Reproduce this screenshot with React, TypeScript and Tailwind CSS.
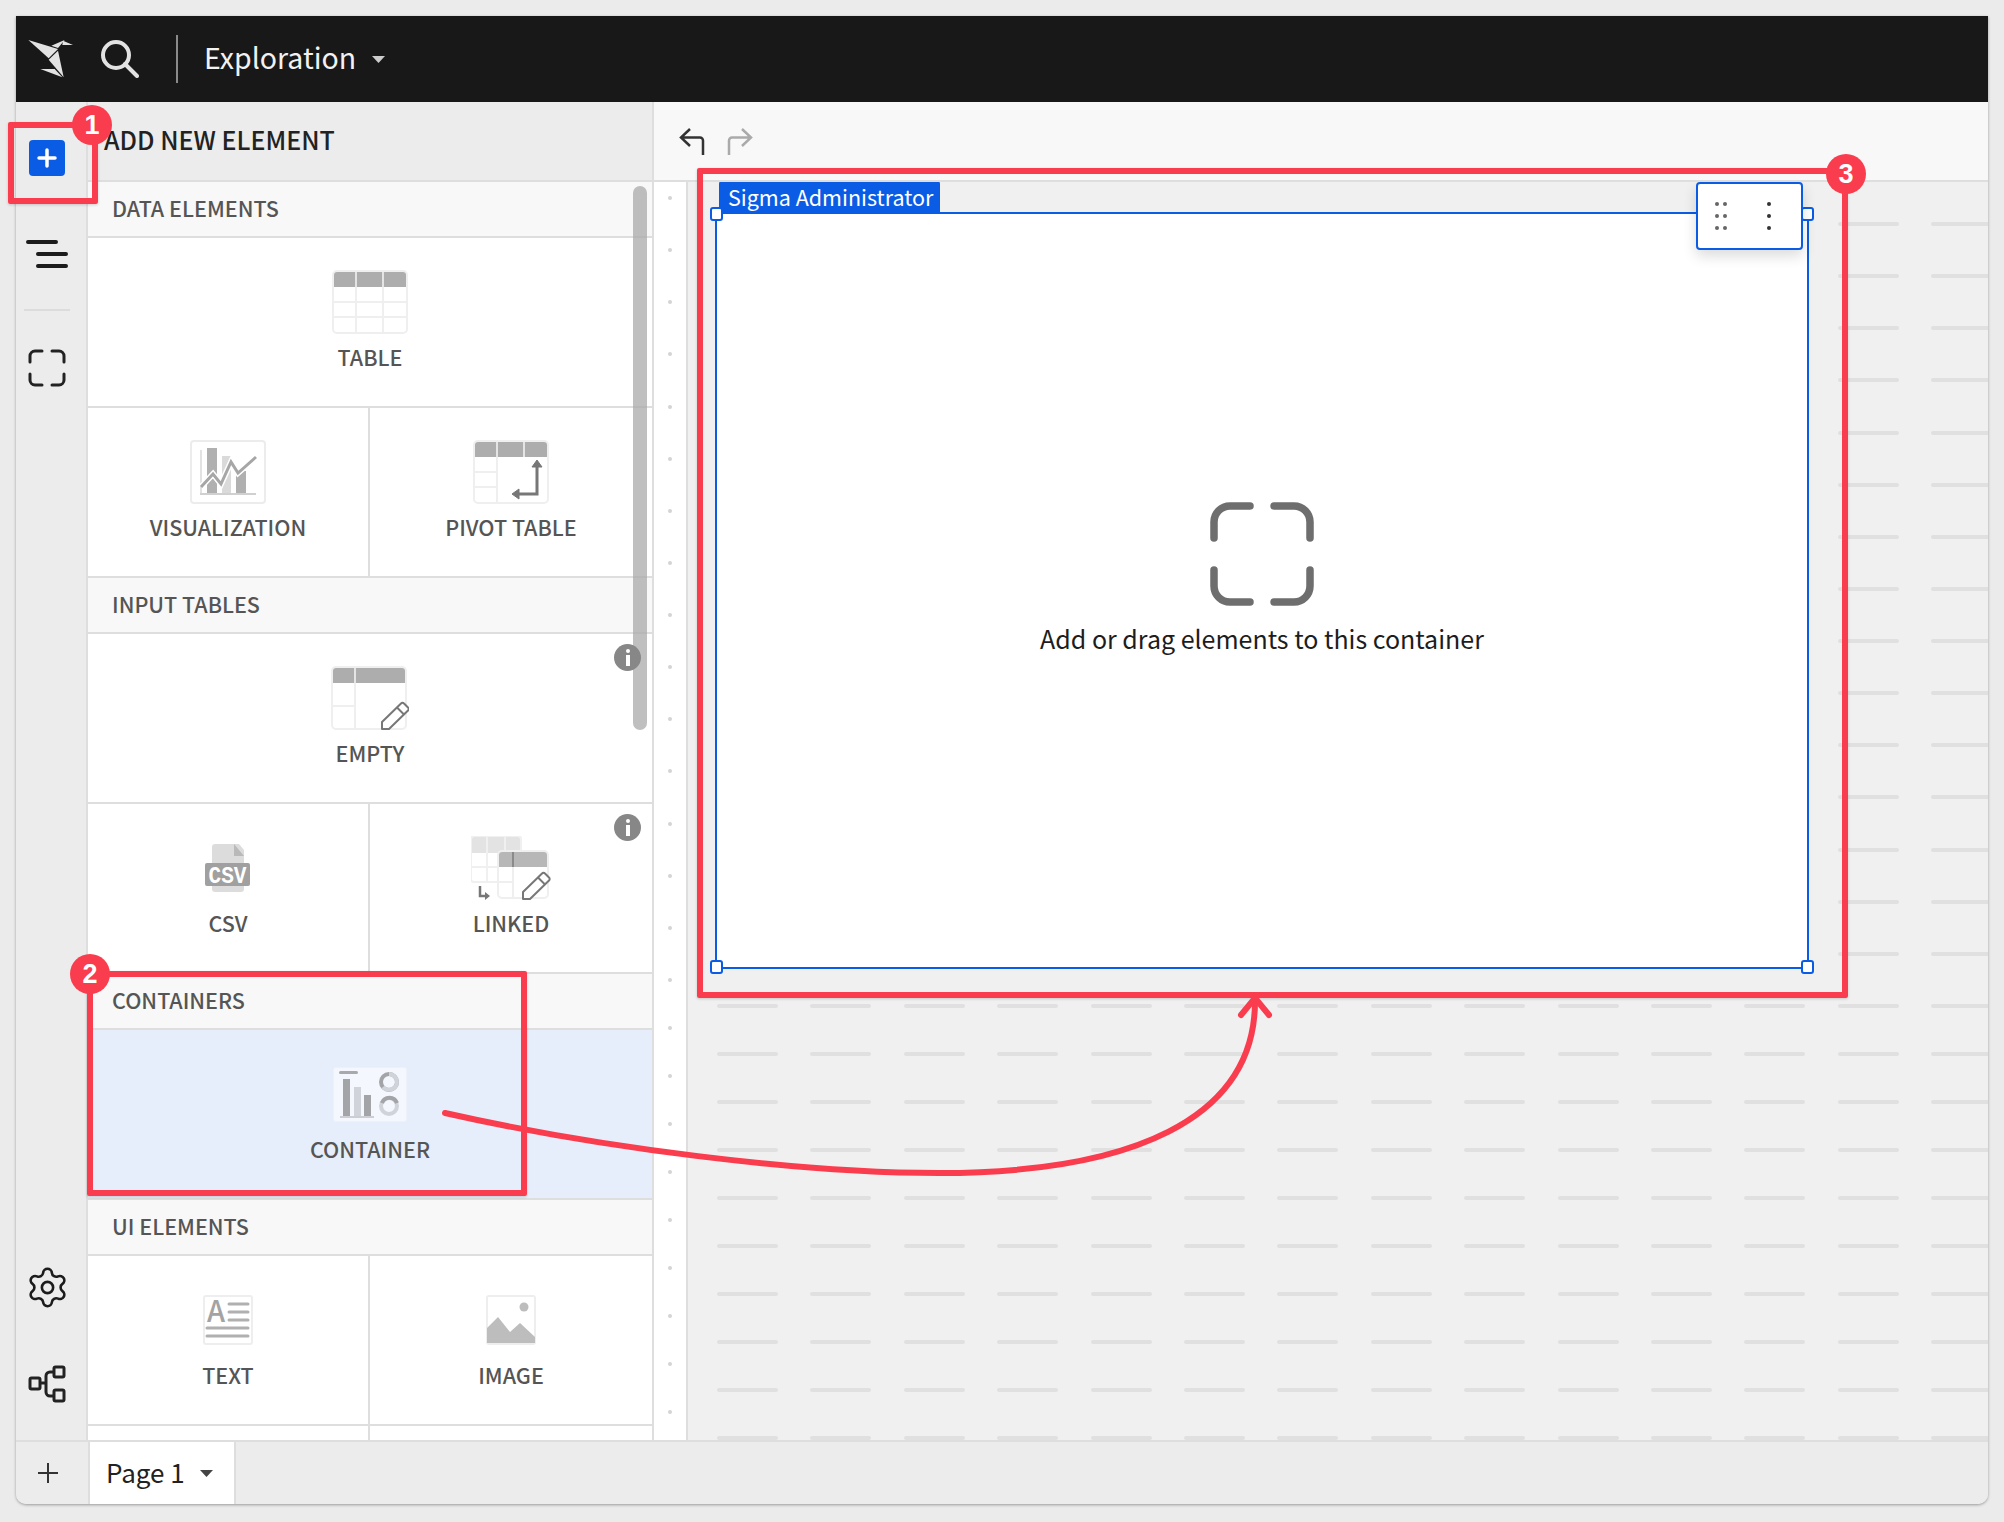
import React from "react";
import { Settings } from "lucide-react";

const font = { fontFamily: '"Noto Sans CJK SC", "Noto Sans", sans-serif' };

function TableBase({ v, rows, band = "#adadad" }: { v: number[]; rows: { x1: number; x2: number; y: number }[]; band?: string }) {
  return (
    <>
      <rect x="1" y="1" width="74" height="62" rx="4" fill="#fff" stroke="#efefef" strokeWidth="2" />
      <path d="M2 5a3 3 0 0 1 3-3h66a3 3 0 0 1 3 3v12H2z" fill={band} />
      {v.map((x) => (
        <line key={x} x1={x} x2={x} y1="2" y2="17" stroke="#e4e4e4" strokeWidth="2" />
      ))}
      {v.map((x) => (
        <line key={"b" + x} x1={x} x2={x} y1="17" y2="62" stroke="#efefef" strokeWidth="2" />
      ))}
      {rows.map((r) => (
        <line key={r.y + "-" + r.x1} x1={r.x1} x2={r.x2} y1={r.y} y2={r.y} stroke="#efefef" strokeWidth="2" />
      ))}
    </>
  );
}

const Pencil = ({ dx = 0, dy = 0 }: { dx?: number; dy?: number }) => (
  <g transform={`translate(${dx} ${dy})`} fill="#fff" stroke="#777" strokeWidth="2" strokeLinejoin="round">
    <path d="M51 63v-7L70 37.500a2 2 0 0 1 3 0l4 4a2 2 0 0 1 0 3L58 63z" />
    <path d="M66 41.500l7 7" fill="none" />
  </g>
);

const TableIcon = () => (
  <svg width="76" height="64" viewBox="0 0 76 64">
    <TableBase v={[24, 51]} rows={[{ x1: 2, x2: 74, y: 32 }, { x1: 2, x2: 74, y: 47 }]} />
  </svg>
);

const VizIcon = () => (
  <svg width="76" height="64" viewBox="0 0 76 64">
    <rect x="1" y="1" width="74" height="62" rx="3" fill="#fff" stroke="#ececec" strokeWidth="2" />
    <rect x="10" y="10" width="2" height="44" fill="#e2e2e2" />
    <rect x="17" y="8" width="10" height="45" fill="#b0b0b0" />
    <rect x="32" y="16" width="9" height="37" fill="#dadada" />
    <rect x="46" y="31" width="10" height="22" fill="#b0b0b0" />
    <rect x="10" y="53" width="56" height="2" fill="#d0d0d0" />
    <polyline points="11,47 23,34 31,44 41,22 48,33 66,17" fill="none" stroke="#fff" strokeWidth="6" />
    <polyline points="11,47 23,34 31,44 41,22 48,33 66,17" fill="none" stroke="#a6a6a6" strokeWidth="3" />
  </svg>
);

const PivotIcon = () => (
  <svg width="76" height="64" viewBox="0 0 76 64">
    <rect x="1" y="1" width="74" height="62" rx="4" fill="#fff" stroke="#efefef" strokeWidth="2" />
    <path d="M2 5a3 3 0 0 1 3-3h66a3 3 0 0 1 3 3v12H2z" fill="#adadad" />
    <line x1="24" x2="24" y1="2" y2="17" stroke="#e4e4e4" strokeWidth="2" />
    <line x1="51" x2="51" y1="2" y2="17" stroke="#e4e4e4" strokeWidth="2" />
    <line x1="24" x2="24" y1="17" y2="62" stroke="#efefef" strokeWidth="2" />
    <line x1="2" x2="24" y1="32" y2="32" stroke="#efefef" strokeWidth="2" />
    <line x1="2" x2="24" y1="47" y2="47" stroke="#efefef" strokeWidth="2" />
    <path d="M64 24v30H42" fill="none" stroke="#777" strokeWidth="3" />
    <path d="M64 20l-5 7h10zM39 54l7-5v10z" fill="#777" stroke="#777" strokeLinejoin="round" />
  </svg>
);

const EmptyIcon = () => (
  <svg width="78" height="64" viewBox="0 0 78 64">
    <TableBase v={[24]} rows={[{ x1: 2, x2: 24, y: 40 }]} />
    <Pencil />
  </svg>
);

const CsvIcon = () => (
  <svg width="46" height="48" viewBox="0 0 46 48">
    <path d="M7 3a3 3 0 0 1 3-3h24l5 6v39a3 3 0 0 1-3 3H10a3 3 0 0 1-3-3z" fill="#dcdcdc" />
    <path d="M29 0l10 12H29z" fill="#b9b9b9" />
    <rect x="0" y="19" width="45" height="23" rx="2" fill="#a0a0a0" />
    <text x="22.500" y="38.500" textAnchor="middle" fontSize="24" fontWeight="700" fill="#fff" fontFamily='"Liberation Mono", monospace' textLength="38" lengthAdjust="spacingAndGlyphs">CSV</text>
  </svg>
);

const LinkedIcon = () => (
  <svg width="80" height="64" viewBox="0 0 80 64">
    <path d="M3 0h44a3 3 0 0 1 3 3v43H3a3 3 0 0 1-3-3V3a3 3 0 0 1 3-3z" fill="#fff" stroke="#f0f0f0" strokeWidth="2" />
    <path d="M1 3a2 2 0 0 1 2-2h44a2 2 0 0 1 2 2v14H1z" fill="#e3e3e3" />
    <path d="M16 1v44M34 1v16M1 31h30" stroke="#f0f0f0" strokeWidth="2" fill="none" />
    <rect x="27" y="15" width="50" height="47" rx="4" fill="#fff" stroke="#efefef" strokeWidth="2" />
    <path d="M28 19a3 3 0 0 1 3-3h42a3 3 0 0 1 3 3v12H28z" fill="#b7b7b7" />
    <path d="M42 16v15" stroke="#8a8a8a" strokeWidth="2" />
    <path d="M42 31v30M28 46h14" stroke="#efefef" strokeWidth="2" />
    <path d="M9 50v10h7" fill="none" stroke="#777" strokeWidth="2.500" />
    <path d="M19 60l-5-4v8z" fill="#777" />
    <Pencil dx={1} dy={0} />
  </svg>
);

const ContainerIcon = () => (
  <svg width="74" height="55" viewBox="0 0 74 55">
    <rect x="0.500" y="0.500" width="73" height="54" rx="2" fill="#f4f7fd" stroke="#eef1f8" />
    <rect x="6" y="4" width="19" height="3" rx="1.500" fill="#a8a9ad" />
    <rect x="10" y="12" width="7" height="37" fill="#a3a4a8" />
    <rect x="21" y="20" width="7" height="29" fill="#d0d3da" />
    <rect x="31" y="28" width="7" height="21" fill="#a3a4a8" />
    <rect x="7" y="49" width="34" height="2" fill="#ccced4" />
    <circle cx="56" cy="15" r="8" fill="none" stroke="#a3a4a8" strokeWidth="4" />
    <path d="M56 7a8 8 0 0 1 8 8 8 8 0 0 1-14 5" fill="none" stroke="#d0d3da" strokeWidth="4" />
    <circle cx="56" cy="39" r="8" fill="none" stroke="#d0d3da" strokeWidth="4" />
    <path d="M49 36a8 8 0 0 1 15 0" fill="none" stroke="#a3a4a8" strokeWidth="4" />
  </svg>
);

const TextIcon = () => (
  <svg width="50" height="50" viewBox="0 0 50 50">
    <rect x="1" y="1" width="48" height="48" rx="2" fill="#fff" stroke="#eeeeee" strokeWidth="2" />
    <text x="4" y="27" fontSize="29" fontWeight="500" fill="#a3a3a3" style={font}>A</text>
    <path d="M26 9h19M26 17h19M26 25h19M4 33h41M4 41h41" stroke="#b0b0b0" strokeWidth="3" strokeLinecap="round" />
  </svg>
);

const ImageIcon = () => (
  <svg width="50" height="50" viewBox="0 0 50 50">
    <rect x="1" y="1" width="48" height="48" rx="2" fill="#fff" stroke="#eeeeee" strokeWidth="2" />
    <circle cx="38" cy="12" r="4.500" fill="#bdbdbd" />
    <path d="M1 33l11-11 12 15 10-9 15 14v6H1z" fill="#bdbdbd" strokeLinejoin="round" />
  </svg>
);

const Info = ({ className }: { className: string }) => (
  <div className={"absolute w-[27px] h-[27px] rounded-full bg-[#878787] flex flex-col items-center justify-center gap-[2px] " + className}>
    <span className="w-[4px] h-[4px] rounded-full bg-white" />
    <span className="w-[4px] h-[11px] bg-white" />
  </div>
);

function Section({ label }: { label: string }) {
  return (
    <div className="h-[56px] shrink-0 bg-[#f8f8f8] border-b-2 border-[#dedede] pl-6 pb-[1px] flex items-center text-[21.500px] font-medium text-[#555]">
      {label}
    </div>
  );
}

function Cell({ label, children, border, bg }: { label: string; children: React.ReactNode; border?: boolean; bg?: string }) {
  return (
    <div className={"min-w-0 relative flex flex-col items-center pt-8 " + (border ? "w-[282px] shrink-0 border-r-2 border-[#dedede] " : "flex-1 ") + (bg ?? "bg-white")}>
      <div className="h-16 flex items-center justify-center">{children}</div>
      <div className="h-12 pb-[2px] flex items-center text-[21.500px] font-medium text-[#555]">{label}</div>
    </div>
  );
}

const Row = ({ children }: { children: React.ReactNode }) => (
  <div className="flex shrink-0 border-b-2 border-[#dedede] h-[170px]">{children}</div>
);

const pitches = [...Array(15).fill("h-[52.130px]"), ...Array(10).fill("h-[48px]")] as string[];

function Sidebar() {
  return (
    <div className="w-[72px] shrink-0 bg-[#ececec] border-r-2 border-[#dedede] flex flex-col items-center pt-[38px] pb-[37px] pr-[8px]">
      <div className="w-9 h-9 rounded-[4px] bg-[#0b5ce5] flex items-center justify-center">
        <svg width="22" height="22" viewBox="0 0 22 22"><path d="M11 3v16M3 11h16" stroke="#fff" strokeWidth="3.500" strokeLinecap="round" /></svg>
      </div>
      <svg className="mt-[62px]" width="42" height="30" viewBox="0 0 42 30">
        <path d="M2 4h28M12 16h28M12 28h28" stroke="#1c1c1c" strokeWidth="4" strokeLinecap="round" />
      </svg>
      <div className="w-[46px] h-[2px] bg-[#dcdcdc] mt-[41px]" />
      <svg className="mt-[38px]" width="38" height="38" viewBox="0 0 38 38" fill="none" stroke="#222" strokeWidth="3" strokeLinecap="round">
        <path d="M2 13V7a5 5 0 0 1 5-5h7M24 2h7a5 5 0 0 1 5 5v6M36 25v6a5 5 0 0 1-5 5h-7M14 36H7a5 5 0 0 1-5-5v-6" />
      </svg>
      <div className="flex-1" />
      <Settings size={45} strokeWidth={1.400} color="#1c1c1c" />
      <svg className="mt-[55px]" width="38" height="38" viewBox="0 0 38 38" fill="none" stroke="#222" strokeWidth="3">
        <rect x="2" y="13" width="10" height="11" rx="1.500" />
        <rect x="26" y="2" width="10" height="10" rx="1.500" />
        <rect x="26" y="25" width="10" height="11" rx="1.500" />
        <path d="M12 18h6M26 7h-4a4 4 0 0 0-4 4v16a4 4 0 0 0 4 4h4" />
      </svg>
    </div>
  );
}

function Panel() {
  return (
    <div className="w-[564px] shrink-0 flex flex-col relative">
      <div className="h-[80px] shrink-0 bg-[#ececec] border-b-2 border-[#dedede] pl-4 pb-[3px] flex items-center text-[25px] font-medium text-[#222]">
        ADD NEW ELEMENT
      </div>
      <Section label="DATA ELEMENTS" />
      <Row><Cell label="TABLE"><TableIcon /></Cell></Row>
      <Row>
        <Cell label="VISUALIZATION" border><VizIcon /></Cell>
        <Cell label="PIVOT TABLE"><PivotIcon /></Cell>
      </Row>
      <Section label="INPUT TABLES" />
      <Row><Cell label="EMPTY"><EmptyIcon /></Cell></Row>
      <Row>
        <Cell label="CSV" border><CsvIcon /></Cell>
        <Cell label="LINKED"><LinkedIcon /></Cell>
      </Row>
      <Section label="CONTAINERS" />
      <Row><Cell label="CONTAINER" bg="bg-[#e6eefb]"><ContainerIcon /></Cell></Row>
      <Section label="UI ELEMENTS" />
      <Row>
        <Cell label="TEXT" border><TextIcon /></Cell>
        <Cell label="IMAGE"><ImageIcon /></Cell>
      </Row>
      <div className="flex flex-1 min-h-0">
        <div className="w-[282px] bg-white border-r-2 border-[#dedede]" />
        <div className="flex-1 bg-white" />
      </div>
      <div className="absolute left-[545px] top-[84px] w-[14px] h-[544px] rounded-full bg-[#a9a9a9]/75" />
      <Info className="left-[526px] top-[542px]" />
      <Info className="left-[526px] top-[712px]" />
    </div>
  );
}

function Handle({ className }: { className: string }) {
  return <div className={"absolute w-[13px] h-[14px] rounded-[3px] bg-white border-2 border-[#0b5ce5] " + className} />;
}

function Canvas() {
  return (
    <div className="flex-1 flex min-h-0">
      <div className="w-[34px] shrink-0 bg-white border-r-2 border-[#dedede] pt-[14px] flex flex-col items-center overflow-hidden">
        {pitches.map((h, i) => (
          <div key={i} className={"shrink-0 " + h}>
            <div className="w-[4px] h-[4px] rounded-full bg-[#d4d4d4]" />
          </div>
        ))}
      </div>
      <div className="flex-1 relative bg-[#f0f0f0] overflow-hidden pt-10 pl-[29px]">
        {pitches.map((h, i) => (
          <div key={i} className={"flex gap-[32.400px] shrink-0 " + h}>
            {Array.from({ length: 14 }).map((_, j) => (
              <div key={j} className="w-[61px] h-1 shrink-0 rounded-full bg-[#e0e0e0]" />
            ))}
          </div>
        ))}
        <div className="absolute left-[27px] top-[30px] w-[1094px] h-[757px] bg-white border-2 border-[#0b5ce5] flex flex-col items-center pt-[288px]">
          <div className="absolute left-0 -top-[33px] ml-[2px] h-[31px] pl-[9px] pr-[7px] bg-[#0b5ce5] rounded-t-[3px] text-white text-[21.500px] leading-[31px]">
            Sigma Administrator
          </div>
          <svg width="104" height="104" viewBox="0 0 104 104" fill="none" stroke="#6e6e6e" strokeWidth="7.500" strokeLinecap="round">
            <path d="M4 36V20A16 16 0 0 1 20 4h20M64 4h20a16 16 0 0 1 16 16v16M100 68v16a16 16 0 0 1-16 16H64M40 100H20A16 16 0 0 1 4 84V68" />
          </svg>
          <div className="mt-3 pb-[2px] text-[25px] leading-10 text-[#1d1d1d]">Add or drag elements to this container</div>
          <Handle className="-left-[7px] -top-[7px]" />
          <Handle className="-right-[7px] -top-[7px]" />
          <Handle className="-left-[7px] -bottom-[7px]" />
          <Handle className="-right-[7px] -bottom-[7px]" />
          <div className="absolute right-[4px] -top-[32px] w-[107px] h-[68px] bg-white border-2 border-[#0b5ce5] rounded-[4px] shadow-[0_6px_14px_rgba(0,0,0,0.14)] flex items-center justify-between pl-[17px] pr-[30px]">
            <div className="grid grid-cols-2 gap-x-[4px] gap-y-[8px]">
              {Array.from({ length: 6 }).map((_, i) => (
                <span key={i} className="w-1 h-1 rounded-full bg-[#666]" />
              ))}
            </div>
            <div className="flex flex-col gap-[8px]">
              {[0, 1, 2].map((i) => (
                <span key={i} className="w-1 h-1 rounded-full bg-[#333]" />
              ))}
            </div>
          </div>
        </div>
      </div>
    </div>
  );
}

const Badge = ({ n, className }: { n: string; className: string }) => (
  <div className={"absolute w-[40px] h-[40px] rounded-full bg-[#fa3d4e] text-white font-bold text-[27px] flex items-center justify-center " + className} style={{ fontFamily: '"Liberation Sans", sans-serif' }}>
    {n}
  </div>
);

const Box = ({ className }: { className: string }) => (
  <div className={"absolute border-[6px] border-[#fa3d4e] rounded-[2px] shadow-[0_1px_3px_rgba(0,0,0,0.18)] " + className} />
);

export default function App() {
  return (
    <div className="relative w-[2004px] h-[1522px] bg-[#ebebeb] p-4 overflow-hidden" style={font}>
      <div className="h-[1488px] flex flex-col overflow-hidden rounded-b-[10px] shadow-[0_1px_3px_rgba(0,0,0,0.35)]">
        <header className="h-[86px] shrink-0 bg-[#181818] flex items-center pl-[12px]">
          <svg width="46" height="40" viewBox="36 55 136 120" fill="#e2e2e2">
            <polygon points="36,58 125,85 97,113" />
            <polygon points="97,117 125,90 142,170" />
            <polygon points="72,145 115,145 138,170" />
            <polygon points="105,75 145,58 125,82" />
            <polygon points="140,60 170,73 138,73" />
          </svg>
          <svg className="ml-[27px]" width="38" height="38" viewBox="0 0 38 38" fill="none" stroke="#e2e2e2" strokeWidth="4" strokeLinecap="round">
            <circle cx="15" cy="15" r="13" />
            <path d="M24 24l12 12" />
          </svg>
          <div className="ml-[37px] w-[2px] h-12 bg-[#8a8a8a]" />
          <span className="ml-[26px] text-[28.500px] text-[#f2f2f2] pb-[4px]">Exploration</span>
          <svg className="ml-4" width="13" height="7" viewBox="0 0 13 7"><path d="M0 0h13L6.500 7z" fill="#ccc" /></svg>
        </header>
        <div className="flex-1 flex min-h-0">
          <Sidebar />
          <Panel />
          <div className="flex-1 flex flex-col border-l-2 border-[#dedede] min-w-0">
            <div className="h-[80px] shrink-0 bg-[#f8f8f8] border-b-2 border-[#dedede] flex items-center gap-[18px] pl-[25px] pt-[2px]">
              <svg width="28" height="28" viewBox="0 0 28 28" fill="none" stroke="#333" strokeWidth="2.500">
                <path d="M11 1L2 9.500l9 8.500M2 9.500h19a3 3 0 0 1 3 3V27" />
              </svg>
              <svg width="28" height="28" viewBox="0 0 28 28" fill="none" stroke="#aaa" strokeWidth="2.500">
                <path d="M17 1l9 8.500-9 8.500M26 9.500H7a3 3 0 0 0-3 3V27" />
              </svg>
            </div>
            <Canvas />
          </div>
        </div>
        <footer className="h-[64px] shrink-0 bg-[#ececec] border-t-2 border-[#dedede] flex">
          <div className="w-[74px] flex items-center justify-center border-r-2 border-[#dedede] pr-[8px]">
            <svg width="22" height="22" viewBox="0 0 22 22"><path d="M11 1v20M1 11h20" stroke="#333" strokeWidth="2" /></svg>
          </div>
          <div className="w-[146px] bg-white border-r-2 border-[#dedede] flex items-center pl-[16px] text-[26px] text-[#222]">
            <span className="pb-[4px]">Page 1</span>
            <svg className="ml-[15px]" width="13" height="7" viewBox="0 0 13 7"><path d="M0 0h13L6.500 7z" fill="#444" /></svg>
          </div>
        </footer>
      </div>

      <Box className="left-[8px] top-[122px] w-[90px] h-[82px]" />
      <Box className="left-[87px] top-[971px] w-[440px] h-[225px]" />
      <Box className="left-[697px] top-[168px] w-[1151px] h-[830px]" />
      <svg className="absolute left-0 top-0 pointer-events-none" width="2004" height="1522" viewBox="0 0 2004 1522" fill="none" stroke="#fa3d4e" strokeWidth="6" strokeLinecap="round" strokeLinejoin="round">
        <path d="M445 1113C600 1148 800 1173 939 1173C1130 1173 1255 1120 1255 1001" />
        <path d="M1241 1015L1255 998L1269 1015" />
      </svg>
      <Badge n="1" className="left-[72px] top-[105px]" />
      <Badge n="2" className="left-[70px] top-[954px]" />
      <Badge n="3" className="left-[1826px] top-[154px]" />
    </div>
  );
}
